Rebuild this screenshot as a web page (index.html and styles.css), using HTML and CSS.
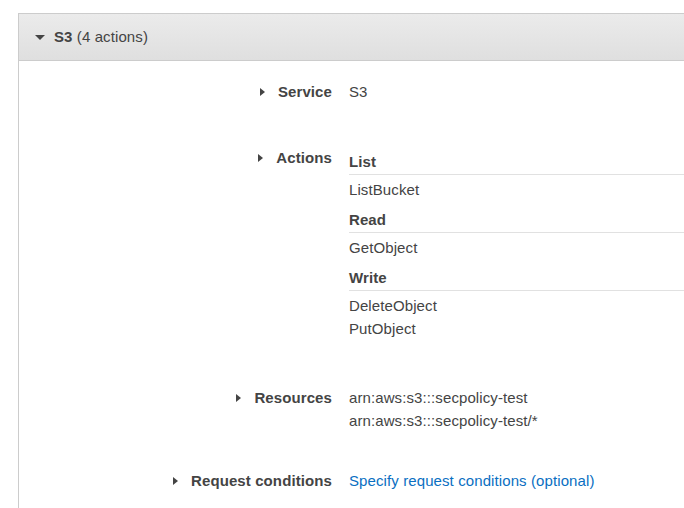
FILE: index.html
```html
<!DOCTYPE html>
<html>
<head>
<meta charset="utf-8">
<link rel="stylesheet" href="styles.css">
</head>
<body>
<div class="panel">
  <div class="panel-header">
    <span class="caret-down"></span>
    <span class="service-name">S3</span>&nbsp;<span class="count">(4 actions)</span>
  </div>
  <div class="panel-body">
    <div class="row row-service">
      <div class="label"><span class="caret-right"></span><span>Service</span></div>
      <div class="value"><div class="line">S3</div></div>
    </div>
    <div class="row row-actions">
      <div class="label"><span class="caret-right"></span><span>Actions</span></div>
      <div class="value">
        <div class="group first">
          <div class="group-title">List</div>
          <div class="group-items">
            <div class="line">ListBucket</div>
          </div>
        </div>
        <div class="group">
          <div class="group-title">Read</div>
          <div class="group-items">
            <div class="line">GetObject</div>
          </div>
        </div>
        <div class="group">
          <div class="group-title">Write</div>
          <div class="group-items">
            <div class="line">DeleteObject</div>
            <div class="line">PutObject</div>
          </div>
        </div>
      </div>
    </div>
    <div class="row row-resources">
      <div class="label"><span class="caret-right"></span><span>Resources</span></div>
      <div class="value">
        <div class="line">arn:aws:s3:::secpolicy-test</div>
        <div class="line">arn:aws:s3:::secpolicy-test/*</div>
      </div>
    </div>
    <div class="row row-conditions">
      <div class="label"><span class="caret-right"></span><span>Request conditions</span></div>
      <div class="value"><div class="line"><a class="link" href="#">Specify request conditions (optional)</a></div></div>
    </div>
  </div>
</div>
</body>
</html>
```
FILE: styles.css
```css
html, body {
  margin: 0;
  padding: 0;
  overflow: hidden;
  background: #fff;
}
body {
  font-family: "Liberation Sans", Arial, sans-serif;
  font-size: 15px;
  letter-spacing: 0.1px;
  color: #444;
  height: 508px;
}
.panel {
  margin: 13px 0 0 18px;
  width: 900px;
  min-height: 600px;
  border-top: 1px solid #cccccc;
  border-left: 1px solid #cccccc;
}
.panel-header {
  height: 45px;
  display: flex;
  align-items: center;
  padding-left: 16px;
  padding-bottom: 1px;
  background: linear-gradient(#ebebeb, #dfdfdf);
  border-bottom: 1px solid #cccccc;
  line-height: 23px;
}
.caret-down {
  width: 0;
  height: 0;
  border-left: 5px solid transparent;
  border-right: 5px solid transparent;
  border-top: 5px solid #444;
  margin-right: 9px;
  margin-top: 1px;
}
.service-name {
  font-weight: bold;
}
.panel-body {
  padding-top: 19px;
}
.row {
  display: flex;
  line-height: 23px;
}
.row-actions { margin-top: 43px; }
.row-resources { margin-top: 46px; }
.row-conditions { margin-top: 37px; }
.label {
  width: 313px;
  flex: none;
  display: flex;
  justify-content: flex-end;
  align-items: center;
  align-self: flex-start;
  font-weight: bold;
  height: 23px;
}
.caret-right {
  width: 0;
  height: 0;
  border-top: 4px solid transparent;
  border-bottom: 4px solid transparent;
  border-left: 5px solid #444;
  margin-right: 13px;
}
.value {
  margin-left: 17px;
  flex: 1;
}
.group-title {
  font-weight: bold;
  padding-top: 7px;
  padding-bottom: 1px;
  border-bottom: 1px solid #e1e1e1;
}
.group.first .group-title {
  padding-top: 4px;
}
.group-items {
  margin-top: 3px;
}
.link {
  color: #0a6fc2;
  text-decoration: none;
}
```
